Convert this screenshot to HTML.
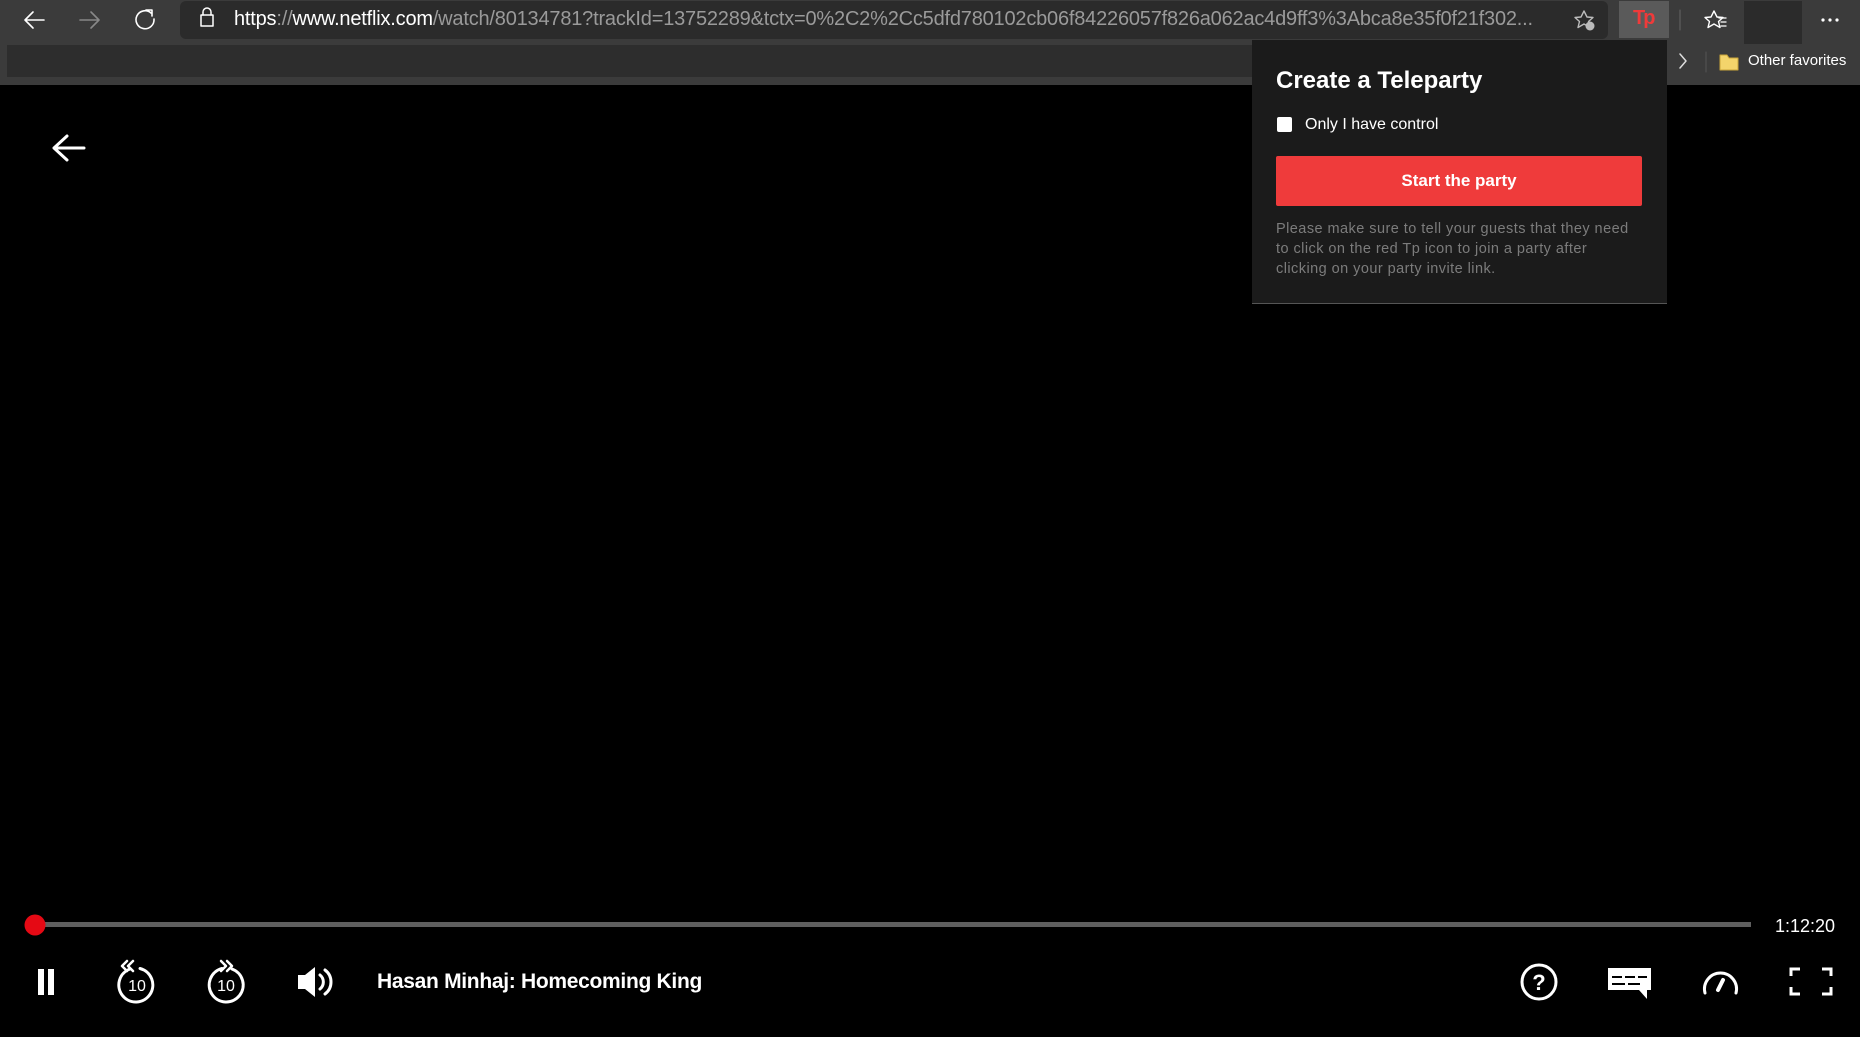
<!DOCTYPE html>
<html><head><meta charset="utf-8"><style>
*{margin:0;padding:0;box-sizing:border-box}
body{width:1860px;height:1037px;background:#000;position:relative;overflow:hidden;font-family:"Liberation Sans",sans-serif}
.a{position:absolute}
</style></head><body>
<div class="a" style="left:0;top:0;width:1860px;height:85px;background:#3b3b3b"></div>
<div class="a" style="left:7px;top:45px;width:1250px;height:32px;background:#2d2d2d"></div>
<div class="a" style="left:180px;top:1px;width:1428px;height:38px;background:#2b2b2b;border-radius:6px"></div>
<div class="a" style="left:234px;top:8px;font-size:20px;color:#9a9a9a;white-space:nowrap;letter-spacing:-0.2px"><span style="color:#fff">https</span>://<span style="color:#fff">www.netflix.com</span>/watch/80134781?trackId=13752289&amp;tctx=0%2C2%2Cc5dfd780102cb06f84226057f826a062ac4d9ff3%3Abca8e35f0f21f302...</div>
<svg class="a" style="left:0;top:0" width="1860" height="85" fill="none" stroke-linecap="round" stroke-linejoin="round">
<g stroke="#fff" stroke-width="1.6"><path d="M26 20h18M33 12l-8 8 8 8"/></g>
<g stroke="#888" stroke-width="1.6"><path d="M80 20h18M91 12l8 8-8 8"/></g>
<g stroke="#fff" stroke-width="1.6"><path d="M151 13a9 9 0 1 0 3 6M146 10h6v6"/></g>
<rect x="201" y="15" width="12" height="11" stroke="#fff" stroke-width="1.5"/><path d="M203 15v-3a4 4 0 0 1 8 0v3" stroke="#fff" stroke-width="1.5"/>
<path d="M1584 11l3 6 6 .5-4.5 4 1.5 6-6-3.5-6 3.5 1.5-6-4.5-4 6-.5z" stroke="#bbb" stroke-width="1.4"/><circle cx="1590" cy="26" r="4.5" fill="#bbb"/>
<line x1="1680" y1="10" x2="1680" y2="30" stroke="#666"/>
<path d="M1714 11l3 6 6 .5-4.5 4 1.5 6-6-3.5-6 3.5 1.5-6-4.5-4 6-.5z" stroke="#fff" stroke-width="1.4"/><path d="M1719 18h7M1721 22h5M1721 26h5" stroke="#fff" stroke-width="1.3"/>
<circle cx="1823" cy="20" r="1.6" fill="#fff"/><circle cx="1830" cy="20" r="1.6" fill="#fff"/><circle cx="1837" cy="20" r="1.6" fill="#fff"/>
<path d="M1680 54l6 7-6 7" stroke="#ddd" stroke-width="1.5"/>
<line x1="1706" y1="52" x2="1706" y2="72" stroke="#555"/>
<path d="M1720 55h7l2 3h9v12h-18z" fill="#f3d46b" stroke="#c9a43a"/>
</svg>
<div class="a" style="left:1619px;top:1px;width:50px;height:37px;background:#5a5a5a"></div>
<div class="a" style="left:1633px;top:7px;font-size:20px;font-weight:bold;color:#ef3a3a;letter-spacing:-2px">Tp</div>
<div class="a" style="left:1744px;top:1px;width:58px;height:43px;background:#2b2b2b"></div>
<div class="a" style="left:1748px;top:52px;font-size:15px;color:#fff">Other favorites</div>
<div class="a" style="left:1252px;top:40px;width:415px;height:264px;background:#1b1b1b;border-bottom:1px solid #555"></div>
<div class="a" style="left:1276px;top:67px;font-size:24px;font-weight:bold;color:#fff">Create a Teleparty</div>
<div class="a" style="left:1277px;top:117px;width:15px;height:15px;background:#fff;border-radius:2px"></div>
<div class="a" style="left:1305px;top:116px;font-size:16px;color:#fff">Only I have control</div>
<div class="a" style="left:1276px;top:156px;width:366px;height:50px;background:#ef3b3b;border-radius:2px;color:#fff;font-size:17px;font-weight:bold;text-align:center;line-height:50px">Start the party</div>
<div class="a" style="left:1276px;top:219px;width:358px;font-size:14.5px;line-height:20px;color:#7c7c7c;letter-spacing:0.45px">Please make sure to tell your guests that they need to click on the red Tp icon to join a party after clicking on your party invite link.</div>
<svg class="a" style="left:0;top:0" width="1860" height="1037" fill="none" stroke-linecap="round" stroke-linejoin="round">
<path d="M54 148h30M67 136l-13 12 13 12" stroke="#fff" stroke-width="3"/>
<rect x="35" y="922" width="1716" height="5" fill="#5f5f5f"/>
<circle cx="35" cy="925" r="10.5" fill="#e50914"/>
<rect x="38" y="969" width="6" height="26" fill="#fff"/><rect x="48" y="969" width="6" height="26" fill="#fff"/>
<g stroke="#fff" stroke-width="3"><path d="M130 969a17 17 0 1 0 10 -0.5"/><path d="M133 961l-5 5 5 5M127 961l-5 5 5 5" stroke-width="2.5"/>
<path d="M232 969a17 17 0 1 1 -10 -0.5"/><path d="M221 961l5 5-5 5M227 961l5 5-5 5" stroke-width="2.5"/></g>
<text x="137" y="991" font-size="16" fill="#fff" text-anchor="middle" font-family="Liberation Sans">10</text>
<text x="226" y="991" font-size="16" fill="#fff" text-anchor="middle" font-family="Liberation Sans">10</text>
<path d="M298 975h7l10-8v30l-10-8h-7z" fill="#fff"/><path d="M320 975a9 9 0 0 1 0 14M325 970a15 15 0 0 1 0 24" stroke="#fff" stroke-width="3"/>
<circle cx="1539" cy="982" r="17" stroke="#fff" stroke-width="3"/>
<text x="1539" y="990" font-size="22" font-weight="bold" fill="#fff" text-anchor="middle" font-family="Liberation Sans">?</text>
<path d="M1608 968h43v22h-4v9l-8-9h-31z" fill="#fff"/>
<path d="M1612 977h10M1625 977h10M1638 977h9M1612 984h13M1628 984h12" stroke="#000" stroke-width="2" stroke-linecap="butt"/>
<path d="M1705 993a16 16 0 1 1 31 0" stroke="#fff" stroke-width="3"/><path d="M1718 990l5-10" stroke="#fff" stroke-width="4"/>
<path d="M1791 976v-7h9M1822 969h9v7M1831 987v7h-9M1800 994h-9v-7" stroke="#fff" stroke-width="3" stroke-linecap="butt" stroke-linejoin="miter"/>
</svg>
<div class="a" style="left:377px;top:970px;font-size:21px;font-weight:bold;color:#fff;letter-spacing:-0.3px">Hasan Minhaj: Homecoming King</div>
<div class="a" style="left:1775px;top:916px;font-size:18px;color:#fff">1:12:20</div>
</body></html>
